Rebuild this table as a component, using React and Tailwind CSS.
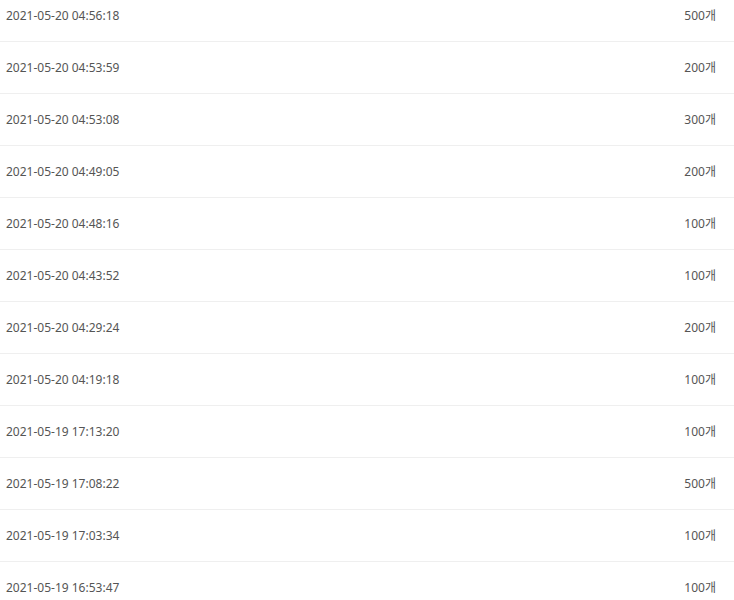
export default function App() {
  const rows = [
    ["2021-05-20 04:56:18", "500개"],
    ["2021-05-20 04:53:59", "200개"],
    ["2021-05-20 04:53:08", "300개"],
    ["2021-05-20 04:49:05", "200개"],
    ["2021-05-20 04:48:16", "100개"],
    ["2021-05-20 04:43:52", "100개"],
    ["2021-05-20 04:29:24", "200개"],
    ["2021-05-20 04:19:18", "100개"],
    ["2021-05-19 17:13:20", "100개"],
    ["2021-05-19 17:08:22", "500개"],
    ["2021-05-19 17:03:34", "100개"],
    ["2021-05-19 16:53:47", "100개"],
  ];
  return (
    <div
      className="w-[734px] h-[600px] overflow-hidden bg-white text-[12px] text-[#555]"
      style={{ fontFamily: '"Noto Sans", "Noto Sans CJK KR", sans-serif' }}
    >
      <div className="-mt-[10px]">
        {rows.map(([d, c], i) => (
          <div
            key={i}
            className="h-[52px] border-b border-[#efefef] flex items-center justify-between pl-[6px] pr-[18px]"
          >
            <span>{d}</span>
            <span>{c}</span>
          </div>
        ))}
      </div>
    </div>
  );
}
